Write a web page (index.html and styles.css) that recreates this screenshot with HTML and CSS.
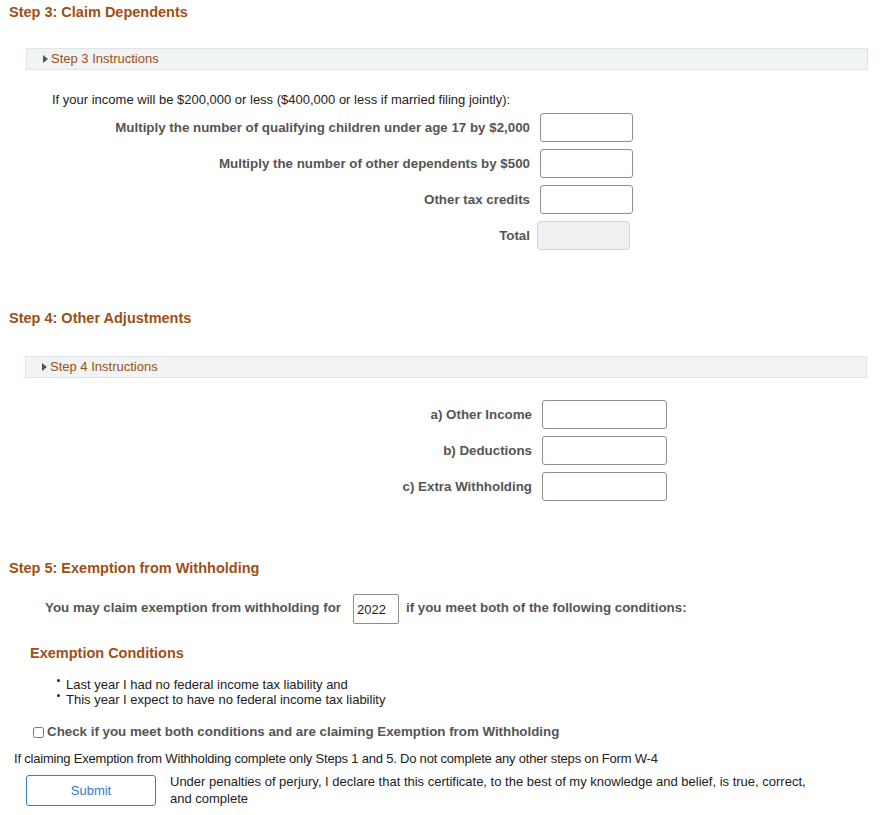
FILE: index.html
```html
<!DOCTYPE html>
<html>
<head>
<meta charset="utf-8">
<link rel="stylesheet" href="styles.css">
</head>
<body>
<div class="page">
  <section class="step step3">
    <h2 class="step-title">Step 3: Claim Dependents</h2>
    <div class="instr-bar"><span class="tri"></span>Step 3 Instructions</div>
    <p class="intro">If your income will be $200,000 or less ($400,000 or less if married filing jointly):</p>
    <div class="fields fields3">
      <label class="flabel">Multiply the number of qualifying children under age 17 by $2,000</label>
      <input class="finput" type="text">
      <label class="flabel">Multiply the number of other dependents by $500</label>
      <input class="finput" type="text">
      <label class="flabel">Other tax credits</label>
      <input class="finput" type="text">
      <label class="flabel">Total</label>
      <div class="ftotal"></div>
    </div>
  </section>

  <section class="step step4">
    <h2 class="step-title">Step 4: Other Adjustments</h2>
    <div class="instr-bar bar4"><span class="tri"></span>Step 4 Instructions</div>
    <div class="fields fields4">
      <label class="flabel">a) Other Income</label>
      <input class="finput wide" type="text">
      <label class="flabel">b) Deductions</label>
      <input class="finput wide" type="text">
      <label class="flabel">c) Extra Withholding</label>
      <input class="finput wide" type="text">
    </div>
  </section>

  <section class="step step5">
    <h2 class="step-title">Step 5: Exemption from Withholding</h2>
    <div class="claim-row">
      <span class="claim-text">You may claim exemption from withholding for</span>
      <input class="year-input" type="text" value="2022">
      <span class="claim-text">if you meet both of the following conditions:</span>
    </div>
    <h3 class="cond-title">Exemption Conditions</h3>
    <ul class="cond-list">
      <li>Last year I had no federal income tax liability and</li>
      <li>This year I expect to have no federal income tax liability</li>
    </ul>
    <label class="check-row"><input class="check" type="checkbox">Check if you meet both conditions and are claiming Exemption from Withholding</label>
    <p class="note">If claiming Exemption from Withholding complete only Steps 1 and 5. Do not complete any other steps on Form W-4</p>
    <div class="submit-row">
      <button class="submit-btn" type="button">Submit</button>
      <p class="perjury">Under penalties of perjury, I declare that this certificate, to the best of my knowledge and belief, is true, correct, and complete</p>
    </div>
  </section>
</div>
</body>
</html>
```

FILE: styles.css
```css
* { box-sizing: border-box; }
html, body { margin: 0; padding: 0; background: #fff; }
body {
  font-family: "Liberation Sans", Arial, sans-serif;
  font-size: 13px;
  color: #222;
}
.page { width: 885px; }

.step-title {
  margin: 0;
  padding-left: 9px;
  font-size: 14.5px;
  line-height: 16px;
  font-weight: bold;
  color: #9e4f16;
}
.step3 .step-title { padding-top: 4px; }

.instr-bar {
  margin: 28px 17px 0 26px;
  height: 22px;
  border: 1px solid #e3e3e3;
  background: #f1f4f4;
  padding-left: 16px;
  line-height: 20px;
  font-size: 13px;
  color: #9e4f16;
  display: flex;
  align-items: center;
}
.instr-bar.bar4 { margin: 30px 18px 0 25px; }
.tri {
  width: 0; height: 0;
  border-top: 4.5px solid transparent;
  border-bottom: 4.5px solid transparent;
  border-left: 5px solid #555;
  margin-right: 3px;
}

.intro {
  margin: 22px 0 0 52px;
  line-height: 16px;
  color: #222;
}

.fields {
  display: grid;
  align-items: center;
  row-gap: 7px;
  column-gap: 10px;
}
.fields3 { grid-template-columns: 522px auto; margin: 5px 0 0 8px; }
.fields4 { grid-template-columns: 524px auto; margin: 22px 0 0 8px; }

.flabel {
  text-align: right;
  font-weight: bold;
  font-size: 13.33px;
  color: #555;
}
.finput {
  width: 93px;
  height: 29px;
  border: 1px solid #8f8f8f;
  border-radius: 3px;
  background: #fff;
  margin: 0;
  padding: 0 4px;
}
.finput.wide { width: 125px; }
.ftotal {
  width: 93px;
  height: 29px;
  margin-left: -3px;
  border: 1px solid #d3d6da;
  border-radius: 3px;
  background: #eff0f2;
}

.step4 .step-title { margin-top: 60px; }
.step5 .step-title { margin-top: 59px; }

.claim-row {
  display: flex;
  align-items: center;
  margin: 18px 0 0 45px;
}
.claim-text {
  font-weight: bold;
  font-size: 13.33px;
  color: #555;
  margin-bottom: 3px;
}
.year-input {
  width: 46px;
  height: 30px;
  margin: 0 7px 0 12px;
  border: 1px solid #8f8f8f;
  border-radius: 2px;
  padding: 0 3px;
  font-family: "Liberation Sans", Arial, sans-serif;
  font-size: 13px;
  color: #222;
}

.cond-title {
  margin: 21px 0 0 30px;
  font-size: 14.5px;
  line-height: 16px;
  font-weight: bold;
  color: #9e4f16;
}
.cond-list {
  list-style: none;
  margin: 16px 0 0 0;
  padding: 0 0 0 57px;
}
.cond-list li {
  line-height: 15px;
  color: #222;
}
.cond-list li::before {
  content: "";
  display: inline-block;
  width: 3px;
  height: 3px;
  border-radius: 50%;
  background: #222;
  vertical-align: 7px;
  margin-right: 6px;
}

.check-row {
  display: flex;
  align-items: center;
  margin: 17px 0 0 33px;
  line-height: 16px;
  font-weight: bold;
  font-size: 13.33px;
  color: #555;
}
.check {
  width: 11px;
  height: 11px;
  margin: 0 3px 0 0;
}

.note {
  margin: 11px 0 0 14px;
  line-height: 16px;
  font-size: 13px;
  letter-spacing: -0.2px;
  color: #222;
}

.submit-row {
  display: flex;
  align-items: flex-start;
  margin: 6px 0 0 26px;
}
.submit-btn {
  width: 130px;
  height: 31px;
  margin-top: 2px;
  border: 1px solid #3a78c9;
  border-radius: 3px;
  background: #fff;
  color: #3a78c9;
  font-family: "Liberation Sans", Arial, sans-serif;
  font-size: 13px;
}
.perjury {
  margin: 0 0 0 14px;
  max-width: 645px;
  line-height: 17px;
  color: #222;
}
```
